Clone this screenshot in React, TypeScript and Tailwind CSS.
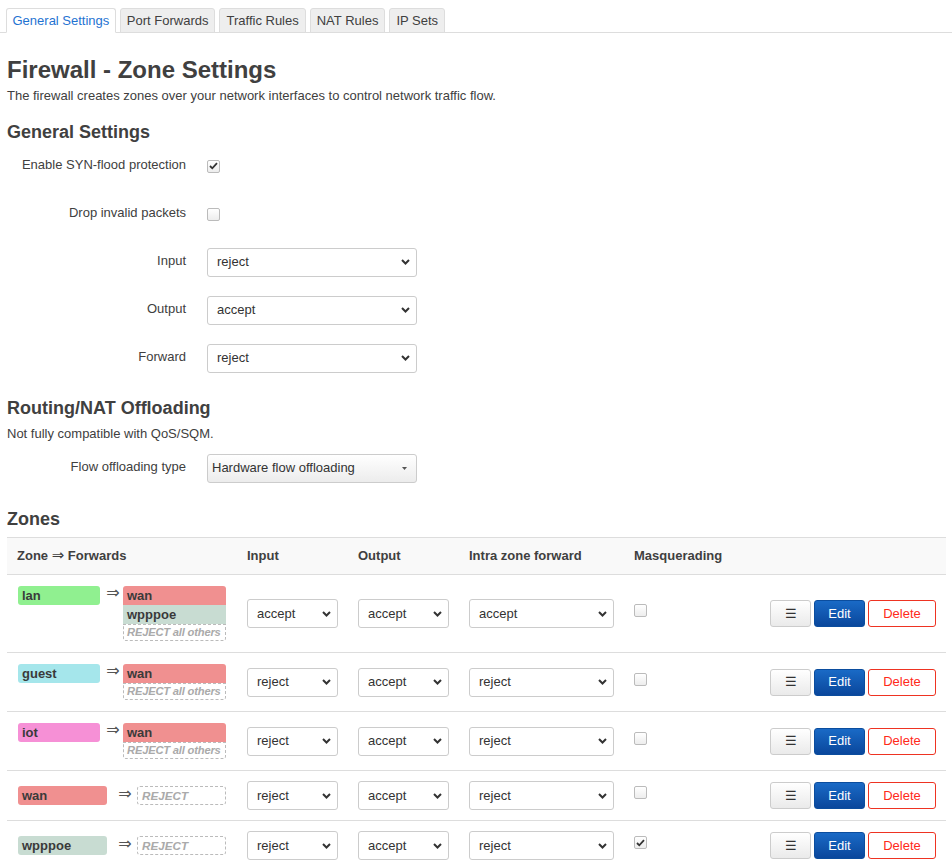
import React from "react";

type Zone = {
  name: string;
  color: string;
  forwards: { name: string; color: string }[];
  input: string;
  output: string;
  intra: string;
  masq: boolean;
};

const WAN = "#f09090";
const WPPPOE = "#c8dcd2";

const zones: Zone[] = [
  { name: "lan", color: "#90f090", forwards: [{ name: "wan", color: WAN }, { name: "wpppoe", color: WPPPOE }], input: "accept", output: "accept", intra: "accept", masq: false },
  { name: "guest", color: "#a5e6eb", forwards: [{ name: "wan", color: WAN }], input: "reject", output: "accept", intra: "reject", masq: false },
  { name: "iot", color: "#f690d6", forwards: [{ name: "wan", color: WAN }], input: "reject", output: "accept", intra: "reject", masq: false },
  { name: "wan", color: WAN, forwards: [], input: "reject", output: "accept", intra: "reject", masq: false },
  { name: "wpppoe", color: WPPPOE, forwards: [], input: "reject", output: "accept", intra: "reject", masq: true },
];

const tabs = ["General Settings", "Port Forwards", "Traffic Rules", "NAT Rules", "IP Sets"];

function Chevron() {
  return (
    <svg width="9" height="6" viewBox="0 0 9 6" className="shrink-0">
      <path d="M1 1l3.5 3.5L8 1" fill="none" stroke="#333" strokeWidth="2" />
    </svg>
  );
}

function Select({ value, width }: { value: string; width: string }) {
  return (
    <div className={`${width} h-[29px] flex items-center justify-between pl-[9px] pr-[6px] border border-[#cccccc] rounded-[3px] bg-white text-[13px] text-[#333]`}>
      <span>{value}</span>
      <Chevron />
    </div>
  );
}

function Checkbox({ checked }: { checked?: boolean }) {
  return (
    <span className="w-[13px] h-[13px] flex items-center justify-center border border-[#bbbbbb] rounded-[2px] bg-gradient-to-b from-white to-[#ededed]">
      {checked && (
        <svg width="9" height="8" viewBox="0 0 9 8">
          <path d="M1 4l2.3 2.3L8 1.2" fill="none" stroke="#333" strokeWidth="1.8" />
        </svg>
      )}
    </span>
  );
}

function FormRow({ label, children }: { label: string; children: React.ReactNode }) {
  return (
    <div className="flex items-center h-[30px]">
      <div className="w-[179px] text-right text-[13px] -mt-[2px]">{label}</div>
      <div className="ml-[21px] flex items-center">{children}</div>
    </div>
  );
}

function Badge({ name, color, className = "" }: { name: string; color: string; className?: string }) {
  return (
    <div className={`h-[19px] flex items-center px-[4px] text-[13px] font-bold text-[#3a3a3a] ${className}`} style={{ backgroundColor: color }}>
      {name}
    </div>
  );
}

function Arrow({ className }: { className: string }) {
  return (
    <span className={`font-['DejaVu_Sans',sans-serif] text-[16px] text-[#555] leading-[19px] text-center ${className}`}>
      ⇒
    </span>
  );
}

function ZoneCell({ z }: { z: Zone }) {
  if (z.forwards.length === 0) {
    return (
      <div className="flex items-start pl-[11px]">
        <Badge name={z.name} color={z.color} className="w-[89px] rounded-[3px]" />
        <Arrow className="ml-[6px] w-[24px] -mt-[2px]" />
        <div className="w-[89px] h-[19px] flex items-center px-[4px] border border-dashed border-[#bbbbbb] rounded-[3px] text-[11.7px] italic font-bold text-[#aaaaaa]">
          REJECT
        </div>
      </div>
    );
  }
  return (
    <div className="flex items-start pl-[11px]">
      <Badge name={z.name} color={z.color} className="w-[82px] rounded-[3px]" />
      <Arrow className="ml-[3px] w-[20px] -mt-[3px]" />
      <div className="w-[103px] flex flex-col">
        {z.forwards.map((f, i) => (
          <Badge key={f.name} name={f.name} color={f.color} className={i === 0 ? "rounded-t-[3px]" : ""} />
        ))}
        <div className="h-[17px] flex items-center px-[3px] border border-dashed border-[#bbbbbb] rounded-b-[3px] text-[11.2px] italic font-bold text-[#aaaaaa] tracking-[-0.2px]">
          REJECT all others
        </div>
      </div>
    </div>
  );
}

function Actions() {
  return (
    <div className="flex justify-end gap-[3px] pr-[10px]">
      <button className="w-[41px] h-[27px] flex items-center justify-center border border-[#cccccc] rounded-[3px] bg-gradient-to-b from-white to-[#eaeaea] text-[13px] text-[#333]">
        ☰
      </button>
      <button className="w-[51px] h-[27px] flex items-center justify-center border border-[#0b4d9e] rounded-[3px] bg-gradient-to-b from-[#1a6ac6] to-[#0a479c] text-[13px] text-white">
        Edit
      </button>
      <button className="w-[68px] h-[27px] flex items-center justify-center border border-[#ee3322] rounded-[3px] bg-white text-[13px] text-[#ff2a1a]">
        Delete
      </button>
    </div>
  );
}

const cols = "grid grid-cols-[230px_111px_111px_165px_136px_1fr]";

export default function App() {
  return (
    <div className="w-[952px] min-h-[867px] bg-white text-[#404040] font-['Liberation_Sans',Arial,sans-serif] pt-[8px]">
      {/* Tabs */}
      <div className="flex gap-[4px] pl-[6px] border-b border-[#dddddd] h-[25px]">
        {tabs.map((t, i) => (
          <div
            key={t}
            className={`h-[25px] flex items-center text-[13px] border border-[#dddddd] rounded-t-[3px] ${
              i === 0 ? "px-[5.5px] bg-white border-b-white text-[#1f73d2]" : "px-[6px] bg-[#eeeeee] text-[#404040] h-[24px]"
            }`}
          >
            {t}
          </div>
        ))}
      </div>

      <div className="pl-[7px] pr-[6px]">
        <h1 className="mt-[23px] text-[24px] leading-[28px] font-bold">Firewall - Zone Settings</h1>
        <p className="mt-[3px] text-[13px] leading-[18px]">
          The firewall creates zones over your network interfaces to control network traffic flow.
        </p>

        <h3 className="mt-[16px] text-[18px] leading-[22px] font-bold">General Settings</h3>
        <div className="mt-[8px] flex flex-col gap-[18px]">
          <FormRow label="Enable SYN-flood protection">
            <Checkbox checked />
          </FormRow>
          <FormRow label="Drop invalid packets">
            <Checkbox />
          </FormRow>
          <FormRow label="Input">
            <Select value="reject" width="w-[210px]" />
          </FormRow>
          <FormRow label="Output">
            <Select value="accept" width="w-[210px]" />
          </FormRow>
          <FormRow label="Forward">
            <Select value="reject" width="w-[210px]" />
          </FormRow>
        </div>

        <h3 className="mt-[24px] text-[18px] leading-[22px] font-bold">Routing/NAT Offloading</h3>
        <p className="mt-[6px] text-[13px] leading-[18px]">Not fully compatible with QoS/SQM.</p>
        <div className="mt-[10px]">
          <FormRow label="Flow offloading type">
            <div className="w-[210px] h-[29px] flex items-center justify-between pl-[4px] pr-[9px] border border-[#cccccc] rounded-[3px] bg-gradient-to-b from-white to-[#ececec] text-[13px] text-[#333]">
              <span>Hardware flow offloading</span>
              <svg width="5" height="3" viewBox="0 0 5 3">
                <path d="M0 0h5L2.5 3z" fill="#555" />
              </svg>
            </div>
          </FormRow>
        </div>

        <h3 className="mt-[25px] text-[18px] leading-[22px] font-bold">Zones</h3>

        <div className="mt-[7px] w-[939px]">
          <div className={`${cols} h-[38px] items-center bg-[#f9f9f9] border-t border-b border-[#dddddd] text-[13px] font-bold`}>
            <div className="pl-[10px]">
              Zone <span className="font-['DejaVu_Sans',sans-serif] font-normal text-[15px] leading-[13px]">⇒</span> Forwards
            </div>
            <div className="pl-[10px]">Input</div>
            <div className="pl-[10px]">Output</div>
            <div className="pl-[10px]">Intra zone forward</div>
            <div className="pl-[10px]">Masquerading</div>
            <div />
          </div>
          {zones.map((z) => (
            <div
              key={z.name}
              className={`${cols} items-center ${z.forwards.length ? "py-[11px]" : "py-[10px]"} border-b border-[#dddddd] last:border-b-0`}
            >
              <ZoneCell z={z} />
              <div className="pl-[10px]">
                <Select value={z.input} width="w-[91px]" />
              </div>
              <div className="pl-[10px]">
                <Select value={z.output} width="w-[91px]" />
              </div>
              <div className="pl-[10px]">
                <Select value={z.intra} width="w-[145px]" />
              </div>
              <div className="pl-[10px] mb-[6px]">
                <Checkbox checked={z.masq} />
              </div>
              <Actions />
            </div>
          ))}
        </div>
      </div>
    </div>
  );
}
